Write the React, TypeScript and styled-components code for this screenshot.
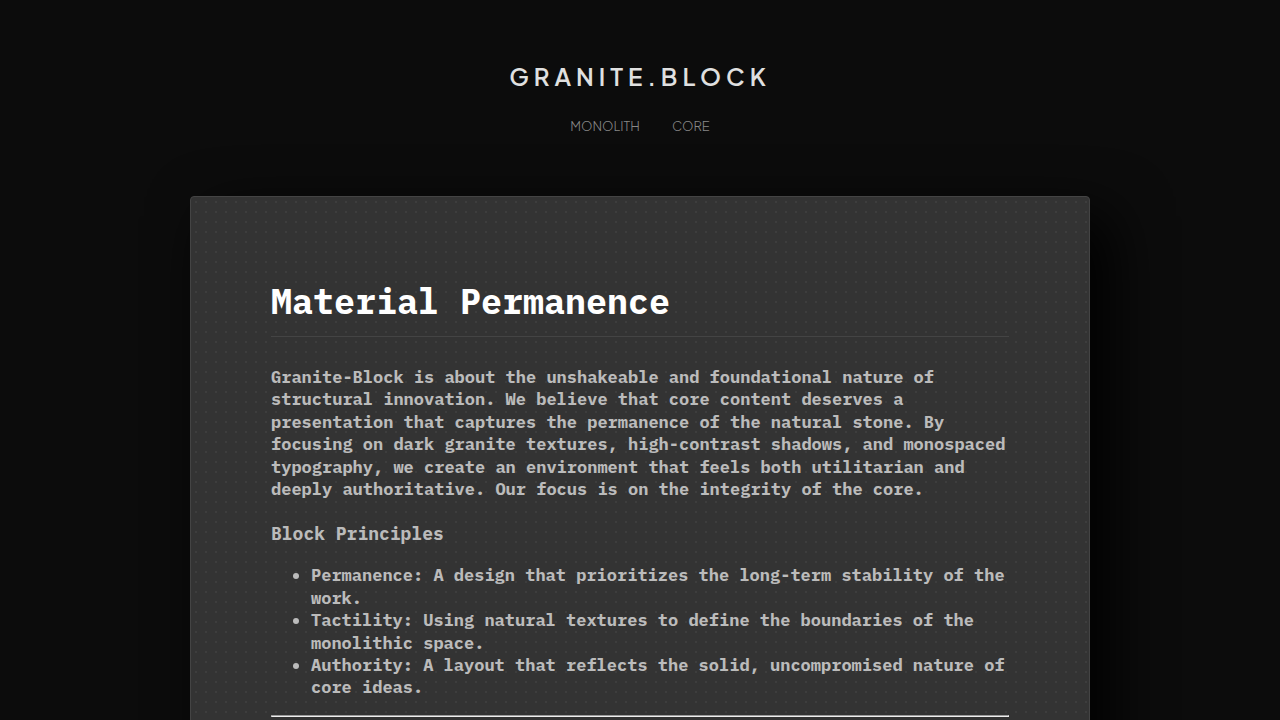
import React from "react";
import styled, { createGlobalStyle } from "styled-components";

const GlobalStyle = createGlobalStyle`
  body {
    margin: 0;
    background: #0c0c0c;
    color: #bbb;
    font-family: "IBM Plex Mono", "Liberation Mono", monospace;
    font-size: 16px;
    font-weight: 700;
    line-height: 140%;
  }
`;

const Header = styled.header`
  display: flex;
  flex-direction: column;
  align-items: center;
  gap: 24px;
  padding: 59px 20px 61px;
  font-family: "Plus Jakarta Sans", Lato, sans-serif;
`;

const Logo = styled.div`
  color: #e0e0e0;
  font-size: 24px;
  line-height: 34px;
  font-weight: 600;
  letter-spacing: 5px;
`;

const Nav = styled.nav`
  display: flex;
  gap: 32px;
`;

const NavLink = styled.a`
  color: #888;
  font-size: 13px;
  line-height: 18px;
  font-weight: 300;
  text-decoration: none;
  text-transform: uppercase;
`;

const Slab = styled.main`
  box-sizing: border-box;
  width: 100%;
  max-width: 900px;
  margin: 0 auto 60px;
  padding: 80px;
  border: 1px solid #444;
  border-radius: 4px;
  background: #333 radial-gradient(#3d3d3d 1px, transparent 1px) 0 0 / 10px 10px;
  box-shadow: 20px 20px 60px #000;
`;

const Title = styled.h1`
  margin: 0 0 29px;
  padding-bottom: 10px;
  border-bottom: 1px solid #444;
  color: #fff;
  font-size: 35px;
  line-height: 49px;
`;

const Paragraph = styled.p`
  margin: 0 0 21px;
  font-size: 17px;
`;

const Subtitle = styled.h3`
  margin: 0 0 17px;
  font-size: 18px;
  line-height: 26px;
`;

const Principles = styled.ul`
  margin: 0 0 16px;
  padding-left: 40px;
  font-size: 17px;
`;

const Rule = styled.hr`
  margin: 0;
  border: 1px inset;
  color: gray;
`;

const principles = [
  "Permanence: A design that prioritizes the long-term stability of the work.",
  "Tactility: Using natural textures to define the boundaries of the monolithic space.",
  "Authority: A layout that reflects the solid, uncompromised nature of core ideas.",
];

export default function App() {
  return (
    <>
      <GlobalStyle />
      <Header>
        <Logo>GRANITE.BLOCK</Logo>
        <Nav>
          <NavLink href="#monolith">Monolith</NavLink>
          <NavLink href="#core">Core</NavLink>
        </Nav>
      </Header>
      <Slab>
        <Title>Material Permanence</Title>
        <Paragraph>
          Granite-Block is about the unshakeable and foundational nature of structural innovation.
          We believe that core content deserves a presentation that captures the permanence of the
          natural stone. By focusing on dark granite textures, high-contrast shadows, and monospaced
          typography, we create an environment that feels both utilitarian and deeply authoritative.
          Our focus is on the integrity of the core.
        </Paragraph>
        <Subtitle>Block Principles</Subtitle>
        <Principles>
          {principles.map((text) => (
            <li key={text}>{text}</li>
          ))}
        </Principles>
        <Rule />
      </Slab>
    </>
  );
}
